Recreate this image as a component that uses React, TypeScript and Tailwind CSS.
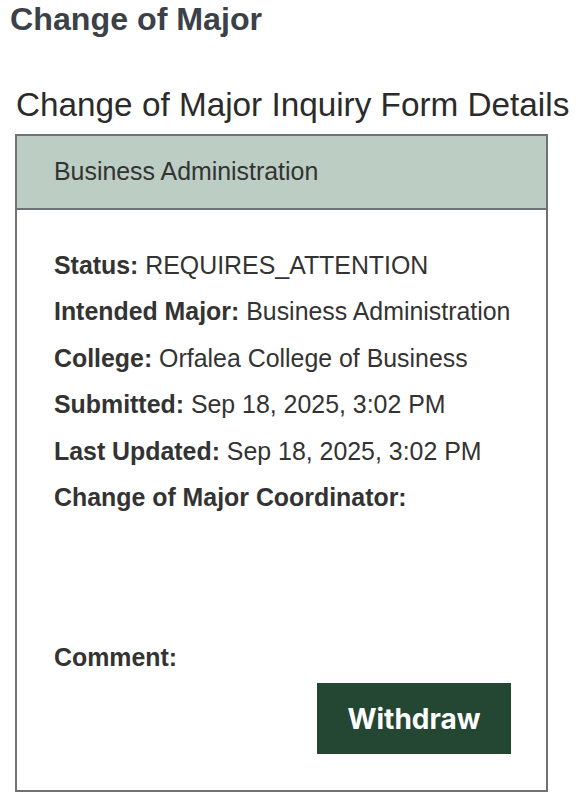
import React from "react";

const rows: { label: string; value: string }[] = [
  { label: "Status:", value: "REQUIRES_ATTENTION" },
  { label: "Intended Major:", value: "Business Administration" },
  { label: "College:", value: "Orfalea College of Business" },
  { label: "Submitted:", value: "Sep 18, 2025, 3:02 PM" },
  { label: "Last Updated:", value: "Sep 18, 2025, 3:02 PM" },
  { label: "Change of Major Coordinator:", value: "" },
];

export default function App() {
  return (
    <div className="w-[578px] h-[806px] bg-white overflow-hidden font-['Liberation_Sans',Arial,sans-serif]">
      <h1 className="pl-[10px] text-[32.2px] leading-[38px] font-bold text-[#3b4148]">
        Change of Major
      </h1>
      <h2 className="mt-[48px] pl-[16px] text-[33.3px] leading-[38px] font-normal text-[#2b2b2b] whitespace-nowrap">
        Change of Major Inquiry Form Details
      </h2>
      <div className="ml-[15px] mt-[10px] w-[533px] h-[658px] border-2 border-[#6e7275] flex flex-col">
        <div className="h-[74px] bg-[#bccdc3] border-b-2 border-[#6e7275] flex items-center pl-[37px] text-[24.9px] text-[#333333]">
          Business Administration
        </div>
        <div className="flex flex-col pl-[37px] pt-[32px] text-[24.9px] text-[#333333]">
          {rows.map((r) => (
            <div key={r.label} className="leading-[46.4px] whitespace-nowrap">
              <span className="font-bold">{r.label}</span>
              {r.value ? " " + r.value : ""}
            </div>
          ))}
          <div className="h-[114px]" />
          <div className="leading-[46px] font-bold">Comment:</div>
          <div className="flex justify-end pr-[35px] mt-[3px]">
            <button className="w-[194px] h-[71px] bg-[#244733] text-white text-[28px] font-bold font-['Inter',sans-serif] flex items-center justify-center">
              Withdraw
            </button>
          </div>
        </div>
      </div>
    </div>
  );
}
